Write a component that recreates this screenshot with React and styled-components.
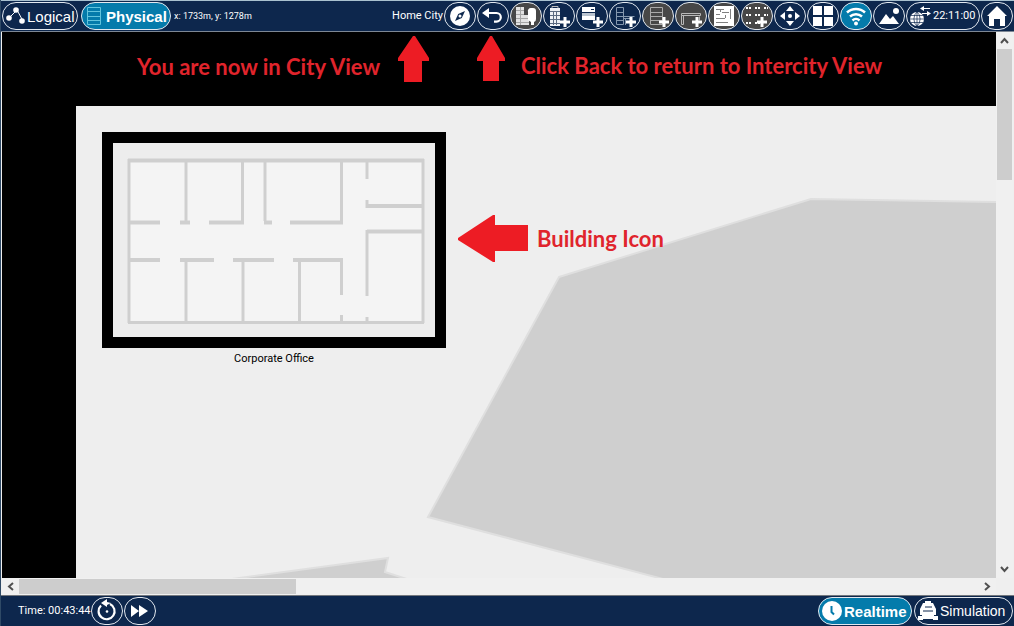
import React from "react";
import styled, { createGlobalStyle, css } from "styled-components";

const navy = "#0d274d";
const blue = "#047bab";
const red = "#ed1c24";
const ui = `"Liberation Sans", Arial, sans-serif`;

const GlobalStyle = createGlobalStyle`
  *, *::before, *::after { box-sizing: border-box; }
  body { margin: 0; font-family: ${ui}; background: ${navy}; }
  button { font: inherit; }
`;

const Shell = styled.div`
  display: flex;
  flex-direction: column;
  min-width: 1000px;
  height: 100vh;
  overflow: hidden;
  background: ${navy};
  border-left: 1px solid #2f4a66;
`;

const Bar = styled.div`
  display: flex;
  align-items: center;
  justify-content: space-between;
  flex: none;
  color: #fff;
`;

const TopBar = styled(Bar).attrs({ as: "header" })`
  height: 32px;
  padding: 0 1px;
  border-top: 1px solid #a9c1cf;
  border-bottom: 1px solid #7d8794;
`;

const BottomBar = styled(Bar).attrs({ as: "footer" })`
  height: 31px;
  padding: 0 1px 0 17px;
  border-top: 1px solid #73777d;
`;

const Group = styled.div`
  display: flex;
  align-items: center;
  gap: ${(p) => p.$gap ?? 1}px;
`;

const Label = styled.span`
  font-family: Roboto, ${ui};
  font-size: ${(p) => p.$size || 11}px;
  line-height: 14px;
  white-space: nowrap;
`;

const pill = css`
  display: flex;
  align-items: center;
  height: 28px;
  border: 1px solid #e3e9f0;
  border-radius: 14px;
  color: #fff;
  background: ${(p) => ({ active: blue, disabled: "#474747" })[p.$tone] || navy};
  cursor: pointer;
  white-space: nowrap;
  svg { flex: none; display: block; }
`;

const ModeButton = styled.button`
  ${pill}
  gap: 2px;
  width: ${(p) => p.$width}px;
  padding: 0 0 0 3px;
  font-size: ${(p) => p.$size || 15}px;
  font-weight: ${(p) => (p.$tone === "active" ? 700 : 400)};
`;

const IconButton = styled.button`
  ${pill}
  justify-content: center;
  width: 32px;
  padding: 0;
`;

const ClockButton = styled.button`
  ${pill}
  width: 74px;
  gap: 2px;
  padding: 0 0 0 3px;
`;

const Viewport = styled.div`
  flex: 1;
  min-height: 0;
  display: grid;
  grid-template-columns: minmax(0, 1fr) 17px;
  grid-template-rows: minmax(0, 1fr) 17px;
  padding: 0 1px;
  background: #efefef;
`;

const Workspace = styled.main`
  position: relative;
  display: flex;
  padding: 74px 0 0 74px;
  background: #000;
  overflow: hidden;
`;

const CityMap = styled.div`
  flex: 1;
  background: #eeeeee;
  overflow: hidden;
  svg { display: block; width: 100%; height: 100%; overflow: visible; }
`;

const Building = styled.figure`
  position: absolute;
  left: 100px;
  top: 100px;
  width: 344px;
  margin: 0;
  text-align: center;
  svg { display: block; border: 11px solid #000; background: #ededed; }
  figcaption { padding-top: 4px; color: #000; }
`;

const Note = styled.div`
  position: absolute;
  left: ${(p) => p.$x}px;
  top: ${(p) => p.$y}px;
  display: flex;
  align-items: ${(p) => p.$align || "flex-end"};
  gap: ${(p) => p.$gap}px;
  color: #e0242c;
  font: 700 22px/30px Lato, ${ui};
  white-space: nowrap;
  svg { display: block; flex: none; }
`;

const Track = styled.div`
  display: flex;
  flex-direction: ${(p) => (p.$vertical ? "column" : "row")};
  background: #f0f0f0;
`;

const ScrollButton = styled.button`
  display: grid;
  place-items: center;
  width: 17px;
  height: 17px;
  padding: 0;
  border: 0;
  background: #f0f0f0;
`;

const Lane = styled.div`
  flex: 1;
  display: flex;
  flex-direction: ${(p) => (p.$vertical ? "column" : "row")};
`;

const Thumb = styled.div`
  flex: 0 0 ${(p) => p.$share}%;
  margin: ${(p) => (p.$vertical ? "0 1px" : "1px 0")};
  background: #cdcdcd;
`;

const Svg = ({ w = 24, h = 24, children, ...rest }) => (
  <svg width={w} height={h} viewBox={`0 0 ${w} ${h}`} fill="none" aria-hidden="true" {...rest}>
    {children}
  </svg>
);

const Plus = ({ x = 18, y = 18 }) => (
  <path d={`M${x - 5} ${y}h10M${x} ${y - 5}v10`} stroke="#fff" strokeWidth="3" />
);

const tools = [
  { label: "Navigation", icon: (
    <Svg><circle cx="12" cy="12" r="10" fill="#fff" /><path d="M17 7l-3.200 7L7 17l3.200-7z" fill={navy} /><circle cx="12" cy="12" r="1.500" fill="#fff" /></Svg>
  ) },
  { label: "Back", icon: (
    <Svg><path d="M5 9h10.500a4.300 4.300 0 0 1 0 8.600H13" stroke="#fff" strokeWidth="2.200" /><path d="M1 9l7-5v4l-1 1 1 1v4z" fill="#fff" /></Svg>
  ) },
  { label: "New City", tone: "disabled", icon: (
    <Svg>
      <path d="M2 3h8v18H2zM10 11h5v10h-5z" fill="#e2e2e2" />
      <path d="M2 6.500h8M2 10.500h8M2 14.500h13M2 18.500h13M6.500 3v18" stroke="#a5a5a5" />
      <path d="M14 8a3 3 0 0 1 3-4h2a3 3 0 0 1 3 3v8a3 3 0 0 1-2 3v3h-3v-3l-3-2z" fill="#fff" />
    </Svg>
  ) },
  { label: "New Building", icon: (
    <Svg>
      <path d="M3 4h10v18H3z" fill="#eef1f5" /><path d="M5 4V2.500h6V4" stroke="#bbb" />
      <path d="M3 7.500h10M3 11.500h10M3 15.500h10M3 19.500h10M6.500 7v14M9.500 7v14" stroke="#5b6a80" /><Plus />
    </Svg>
  ) },
  { label: "New Closet", icon: (
    <Svg><path d="M2 3h13v5H2z" fill="#fff" /><path d="M2 9h13v3H2z" fill="#b9c3cf" /><path d="M2 12h13v4H2z" fill="#fff" /><path d="M11 5.500h3" stroke={navy} /><Plus /></Svg>
  ) },
  { label: "New Rack", icon: (
    <Svg><path d="M3.500 3.500h7v17h-7zM3.500 8.500h7M3.500 12.500h7M3.500 16.500h7M10.500 12.500h11M12.500 14v7M10.500 14.500h8" stroke="#8497ae" /><Plus /></Svg>
  ) },
  { label: "New Shelf", tone: "disabled", icon: (
    <Svg><path d="M4.500 3.500h12v17h-12zM4.500 8.500h12M4.500 12.500h12M4.500 16.500h12" stroke="#aaa" /><Plus /></Svg>
  ) },
  { label: "New Table", tone: "disabled", icon: (
    <Svg><path d="M2.500 9.500h19v2h-19zM2.500 11.500v9h2v-9M20.500 12.500v4" stroke="#b9b9b9" /><Plus /></Svg>
  ) },
  { label: "Device Status", tone: "disabled", icon: (
    <Svg>
      <path d="M2 2h20v20H2z" fill="#fff" />
      <path d="M4 5.500h8M4 10.500h4M10 8.500h7M4 14.500h9M4 18.500h12M8.500 5v3M18.500 5v10M13.500 11v3" stroke="#808080" />
    </Svg>
  ) },
  { label: "Grid", tone: "disabled", icon: (
    <Svg><path d="M1 4h22M1 11h22M1 19h14" stroke="#fff" strokeWidth="2" strokeDasharray="2 1 2 4" /><Plus x={17} y={18} /></Svg>
  ) },
  { label: "Move Object", icon: (
    <Svg><path d="M12 2l4 5H8zM12 22l4-5H8zM2 12l5-4v8zM22 12l-5-4v8z" fill="#fff" /><circle cx="12" cy="12" r="2" fill="#fff" /></Svg>
  ) },
  { label: "Set Grid", icon: (
    <Svg><path d="M2 2h9v9H2zM13 2h9v9h-9zM2 13h9v9H2zM13 13h9v9h-9z" fill="#fff" /></Svg>
  ) },
  { label: "Wireless Signal", tone: "active", icon: (
    <Svg><path d="M3 8.500a13 13 0 0 1 18 0M6 12.500a9 9 0 0 1 12 0M8.500 16.500a5 5 0 0 1 7 0" stroke="#fff" strokeWidth="2.500" /><circle cx="12" cy="19.500" r="2" fill="#fff" /></Svg>
  ) },
  { label: "Set Background", icon: (
    <Svg><path d="M2 20l7-10 4 5 3-3 6 8z" fill="#fff" /><circle cx="19" cy="7" r="3" fill="#fff" /></Svg>
  ) },
];

const walls =
  "M17 17v164M311 17v164M74 17v62M130.500 17v62M153 17v62M229.500 17v62M255 17v20M255 58v8M255 88v66M255 175v6M229.500 117v36M229.500 173v8M74 117v64M131 117v64M187.500 117v64";
const crossWalls =
  "M16 18.500H312M17 80.500h31M68 80.500h10M97 80.500h35M152 80.500h8M178 80.500h53M17 118h31M68 118h34M121 118h41M181 118h50M255 64h56M255 89.500h56";

const Chevron = ({ d }) => (
  <Svg w={11} h={11}><path d={d} stroke="#505050" strokeWidth="2" /></Svg>
);

export default function App() {
  return (
    <>
      <GlobalStyle />
      <Shell>
        <TopBar>
          <Group $gap={3}>
            <ModeButton $width={76}>
              <Svg w={19} h={20}>
                <path d="M3 12l8-8 6 11" stroke="#fff" />
                <circle cx="3" cy="12" r="2.800" fill="#fff" /><circle cx="10" cy="4" r="2.800" fill="#fff" /><circle cx="16" cy="15" r="2.800" fill="#fff" />
              </Svg>
              Logical
            </ModeButton>
            <ModeButton $width={90} $tone="active">
              <Svg w={19} h={20}><path d="M2.500 1.500h13v17h-13zM2.500 5.500h13M2.500 10.500h13M2.500 14.500h13" stroke="#62c4dd" /></Svg>
              Physical
            </ModeButton>
            <Label $size={9}>x: 1733m, y: 1278m</Label>
          </Group>
          <Group>
            <Label>Home City</Label>
            {tools.map((t) => (
              <IconButton key={t.label} aria-label={t.label} $tone={t.tone}>{t.icon}</IconButton>
            ))}
            <ClockButton aria-label="Environment time 22:11:00">
              <Svg w={21} h={22}>
                <circle cx="7" cy="14" r="7" fill="#fff" />
                <path d="M0 14h14M1 10.500h12M1 17.500h12M7 7v14M7 7a6 8 0 0 0 0 14M7 7a6 8 0 0 1 0 14" stroke={navy} strokeWidth="0.700" />
                <path d="M12 3.500h8M12 8.500h8" stroke="#fff" /><path d="M14 1v5l-4-2.500zM17 6v5l4-2.500z" fill="#fff" />
              </Svg>
              <Label>22:11:00</Label>
            </ClockButton>
            <IconButton aria-label="Home">
              <Svg><path d="M12 2l10 10h-2v10h-5v-7H9v7H4V12H2z" fill="#fff" /></Svg>
            </IconButton>
          </Group>
        </TopBar>

        <Viewport>
          <Workspace>
            <CityMap>
              <svg aria-hidden="true">
                <g fill="#cfcfcf" stroke="#dfdfdf" strokeWidth="2">
                  <path d="M483 171L735 93L3000 131V1110L352 411Z" />
                  <path d="M0 494L312 452L309 466L600 560H0Z" />
                </g>
              </svg>
            </CityMap>
            <Building>
              <svg width="344" height="216" viewBox="0 0 322 194" aria-hidden="true">
                <g transform="translate(-1 -1)">
                  <path d="M17 18h294v162H17z" fill="#f4f4f4" />
                  <path d={walls} stroke="#cfcfcf" strokeWidth="3" />
                  <path d={crossWalls} stroke="#cfcfcf" strokeWidth="4" />
                  <path d="M16 180.500H312" stroke="#cfcfcf" strokeWidth="3" />
                </g>
              </svg>
              <Label as="figcaption">Corporate Office</Label>
            </Building>
            <Note $x={135} $y={4} $gap={18}>
              You are now in City View
              <Svg w={31} h={46}><path d="M15 0h2l14 22v3h-7v21H6V25H0v-3z" fill={red} /></Svg>
            </Note>
            <Note $x={475} $y={4} $gap={16}>
              <Svg w={28} h={45}><path d="M13 0h2l13 22v3h-6v20H6V25H0v-3z" fill={red} /></Svg>
              Click Back to return to Intercity View
            </Note>
            <Note $x={456} $y={183} $gap={9} $align="center">
              <Svg w={70} h={47}><path d="M0 23L35 0h2v10h33v26H37v11h-2L0 25z" fill={red} /></Svg>
              Building Icon
            </Note>
          </Workspace>

          <Track $vertical>
            <ScrollButton aria-label="Scroll up"><Chevron d="M2 8l3.500-4L9 8" /></ScrollButton>
            <Lane $vertical><Thumb $vertical $share={25.6} /></Lane>
            <ScrollButton aria-label="Scroll down"><Chevron d="M2 3l3.500 4L9 3" /></ScrollButton>
          </Track>
          <Track>
            <ScrollButton aria-label="Scroll left"><Chevron d="M8 2L4 5.500L8 9" /></ScrollButton>
            <Lane><Thumb $share={28.9} /></Lane>
            <ScrollButton aria-label="Scroll right"><Chevron d="M3 2l4 3.500L3 9" /></ScrollButton>
          </Track>
        </Viewport>

        <BottomBar>
          <Group>
            <Group $gap={0}>
              <Label>Time: 00:43:44</Label>
              <IconButton aria-label="Power cycle devices">
                <Svg><path d="M6 6.500A8 8 0 1 0 15 5" stroke="#fff" strokeWidth="2.200" /><path d="M6 4l6-4v3l4 1-4 2v2z" fill="#fff" /><circle cx="12" cy="12.500" r="1.300" fill="#fff" /></Svg>
              </IconButton>
            </Group>
            <IconButton aria-label="Fast forward time">
              <Svg><path d="M3 6l8 6-8 6zM11 6l9 6-9 6z" fill="#fff" /></Svg>
            </IconButton>
          </Group>
          <Group $gap={2}>
            <ModeButton $width={94} $tone="active">
              <Svg w={20} h={20}><circle cx="10" cy="10" r="10" fill="#fff" /><path d="M9.500 5v6l2.500 2.500" stroke={blue} strokeWidth="2" /></Svg>
              Realtime
            </ModeButton>
            <ModeButton $width={99} $size={14}>
              <Svg w={20} h={20}>
                <path d="M7 0h6v2h2l3 6v6h-2v2H4v-2H2V8l3-6h2z" fill="#fff" />
                <path d="M7 6h7M5 10h10" stroke={navy} />
                <path d="M0 15h5v4H0zM15 15h5v4h-5zM4 16h12v2H4z" fill="#fff" />
              </Svg>
              Simulation
            </ModeButton>
          </Group>
        </BottomBar>
      </Shell>
    </>
  );
}
